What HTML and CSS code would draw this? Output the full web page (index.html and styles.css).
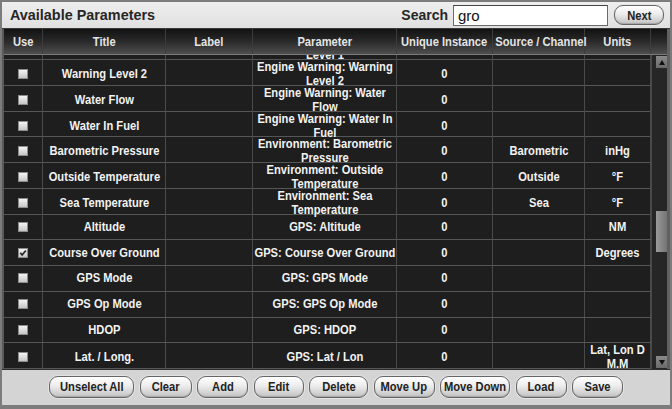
FILE: index.html
```html
<!DOCTYPE html>
<html>
<head>
<meta charset="utf-8">
<title>Available Parameters</title>
<link rel="stylesheet" href="styles.css">
</head>
<body>
<div class="window">
  <div class="titlebar">
    <span class="title">Available Parameters</span>
    <div class="search">
      <span class="search-label">Search</span>
      <div class="search-input">gro</div>
      <button class="btn btn-next"><span class="bt">Next</span></button>
    </div>
  </div>
  <div class="table-area">
    <div class="head">
      <div class="hc"><span class="t">Use</span></div>
      <div class="hc"><span class="t">Title</span></div>
      <div class="hc"><span class="t">Label</span></div>
      <div class="hc"><span class="t">Parameter</span></div>
      <div class="hc"><span class="t">Unique Instance</span></div>
      <div class="hc"><span class="t">Source / Channel</span></div>
      <div class="hc"><span class="t">Units</span></div>
      <div class="hc hc-pad"></div>
    </div>
    <div class="body">
      <div class="viewport">
        <div class="rows">
          <div class="row"><div class="c"><span class="cb"></span></div><div class="c"><span class="t">Warning Level 1</span></div><div class="c"></div><div class="c"><span class="t">Engine Warning: Warning Level 1</span></div><div class="c"><span class="t">0</span></div><div class="c"></div><div class="c"></div></div>
          <div class="row"><div class="c"><span class="cb"></span></div><div class="c"><span class="t">Warning Level 2</span></div><div class="c"></div><div class="c"><span class="t">Engine Warning: Warning Level 2</span></div><div class="c"><span class="t">0</span></div><div class="c"></div><div class="c"></div></div>
          <div class="row"><div class="c"><span class="cb"></span></div><div class="c"><span class="t">Water Flow</span></div><div class="c"></div><div class="c"><span class="t">Engine Warning: Water Flow</span></div><div class="c"><span class="t">0</span></div><div class="c"></div><div class="c"></div></div>
          <div class="row"><div class="c"><span class="cb"></span></div><div class="c"><span class="t">Water In Fuel</span></div><div class="c"></div><div class="c"><span class="t">Engine Warning: Water In Fuel</span></div><div class="c"><span class="t">0</span></div><div class="c"></div><div class="c"></div></div>
          <div class="row"><div class="c"><span class="cb"></span></div><div class="c"><span class="t">Barometric Pressure</span></div><div class="c"></div><div class="c"><span class="t">Environment: Barometric Pressure</span></div><div class="c"><span class="t">0</span></div><div class="c"><span class="t">Barometric</span></div><div class="c"><span class="t">inHg</span></div></div>
          <div class="row"><div class="c"><span class="cb"></span></div><div class="c"><span class="t">Outside Temperature</span></div><div class="c"></div><div class="c"><span class="t">Environment: Outside Temperature</span></div><div class="c"><span class="t">0</span></div><div class="c"><span class="t">Outside</span></div><div class="c"><span class="t">°F</span></div></div>
          <div class="row"><div class="c"><span class="cb"></span></div><div class="c"><span class="t">Sea Temperature</span></div><div class="c"></div><div class="c"><span class="t">Environment: Sea Temperature</span></div><div class="c"><span class="t">0</span></div><div class="c"><span class="t">Sea</span></div><div class="c"><span class="t">°F</span></div></div>
          <div class="row"><div class="c"><span class="cb"></span></div><div class="c"><span class="t">Altitude</span></div><div class="c"></div><div class="c"><span class="t">GPS: Altitude</span></div><div class="c"><span class="t">0</span></div><div class="c"></div><div class="c"><span class="t">NM</span></div></div>
          <div class="row"><div class="c"><span class="cb cb-on"><svg viewBox="0 0 9 9" width="8" height="8"><path d="M1.4 4.3 L3.6 6.6 L7.8 1.6" fill="none" stroke="#2a2a2a" stroke-width="1.9"/></svg></span></div><div class="c"><span class="t">Course Over Ground</span></div><div class="c"></div><div class="c"><span class="t">GPS: Course Over Ground</span></div><div class="c"><span class="t">0</span></div><div class="c"></div><div class="c"><span class="t">Degrees</span></div></div>
          <div class="row"><div class="c"><span class="cb"></span></div><div class="c"><span class="t">GPS Mode</span></div><div class="c"></div><div class="c"><span class="t">GPS: GPS Mode</span></div><div class="c"><span class="t">0</span></div><div class="c"></div><div class="c"></div></div>
          <div class="row"><div class="c"><span class="cb"></span></div><div class="c"><span class="t">GPS Op Mode</span></div><div class="c"></div><div class="c"><span class="t">GPS: GPS Op Mode</span></div><div class="c"><span class="t">0</span></div><div class="c"></div><div class="c"></div></div>
          <div class="row"><div class="c"><span class="cb"></span></div><div class="c"><span class="t">HDOP</span></div><div class="c"></div><div class="c"><span class="t">GPS: HDOP</span></div><div class="c"><span class="t">0</span></div><div class="c"></div><div class="c"></div></div>
          <div class="row"><div class="c"><span class="cb"></span></div><div class="c"><span class="t">Lat. / Long.</span></div><div class="c"></div><div class="c"><span class="t">GPS: Lat / Lon</span></div><div class="c"><span class="t">0</span></div><div class="c"></div><div class="c"><span class="t">Lat, Lon D M.M</span></div></div>
        </div>
      </div>
      <div class="scrollbar">
        <div class="sb-btn"><span class="tri tri-up"></span></div>
        <div class="sb-track"><div class="sb-thumb"></div></div>
        <div class="sb-btn"><span class="tri tri-down"></span></div>
      </div>
    </div>
  </div>
  <div class="footer">
    <button class="btn w85"><span class="bt">Unselect All</span></button>
    <button class="btn w52"><span class="bt">Clear</span></button>
    <button class="btn w51"><span class="bt">Add</span></button>
    <button class="btn w50"><span class="bt">Edit</span></button>
    <button class="btn w59"><span class="bt">Delete</span></button>
    <button class="btn w61"><span class="bt">Move Up</span></button>
    <button class="btn w70"><span class="bt">Move Down</span></button>
    <button class="btn w51"><span class="bt">Load</span></button>
    <button class="btn w51"><span class="bt">Save</span></button>
  </div>
</div>
</body>
</html>
```
FILE: styles.css
```css
* { box-sizing: border-box; }
html, body { margin: 0; padding: 0; }
body {
  width: 672px;
  height: 409px;
  overflow: hidden;
  background: #8a8a8a;
  font-family: "Liberation Sans", Arial, sans-serif;
}
.window {
  width: 672px;
  height: 409px;
  border: 2px solid #7c7c7c;
  border-bottom-width: 4px;
  background: #d2d2d2;
  display: flex;
  flex-direction: column;
}
.titlebar {
  height: 27px;
  flex: none;
  display: flex;
  align-items: center;
  justify-content: space-between;
  padding: 0 6px 0 8px;
  background: linear-gradient(#eeeeee, #e0e0e0);
  border-bottom: 1px solid #3a3a3a;
}
.title {
  font-weight: bold;
  font-size: 14.4px;
  color: #262626;
}
.search {
  display: flex;
  align-items: center;
}
.search-label {
  font-weight: bold;
  font-size: 14px;
  color: #262626;
  margin-right: 5px;
}
.search-input {
  width: 155px;
  height: 21px;
  background: #fff;
  border: 1px solid #6a6a6a;
  border-top-color: #444;
  font-size: 15px;
  line-height: 19px;
  padding-left: 4px;
  color: #111;
  margin-right: 6px;
}

/* condensed bold text used across the grid and the buttons */
.t, .bt {
  transform: scaleX(0.84);
  transform-origin: 50% 50%;
}
.t {
  flex: none;
  display: block;
  width: 119.05%;
  text-align: center;
}
.bt {
  flex: none;
  display: block;
  white-space: nowrap;
}

.btn {
  font-family: "Liberation Sans", Arial, sans-serif;
  font-weight: bold;
  font-size: 13.3px;
  color: #222;
  height: 22px;
  padding: 0;
  border: 1px solid #666;
  border-radius: 9px;
  background: linear-gradient(#ffffff 0%, #ececec 45%, #c2c2c2 100%);
  box-shadow: 0 0 0 1px #e4e4e4, inset 0 -1px 1px rgba(0,0,0,0.15);
  display: flex;
  align-items: center;
  justify-content: center;
  overflow: visible;
}
.btn-next { width: 50px; height: 20px; }
.table-area {
  flex: none;
  height: 340px;
  display: flex;
  flex-direction: column;
  border-left: 2px solid #5a5a5a;
  border-right: 3px solid #606060;
  background: #1e1e1e;
}
.head {
  height: 26px;
  flex: none;
  display: grid;
  grid-template-columns: 39px 123px 87px 144px 96px 92px 66px 16px;
  background: linear-gradient(#121212 0%, #2a2a2a 50%, #4e4e4e 100%);
  border-bottom: 1px solid #7a7a7a;
}
.hc {
  display: flex;
  align-items: center;
  justify-content: center;
  font-weight: bold;
  font-size: 13.3px;
  color: #e4e4e4;
  border-right: 1px solid #3c3c3c;
  white-space: nowrap;
  padding: 0 2px;
}
.hc-pad { border-right: none; }
.body {
  flex: 1;
  display: flex;
  min-height: 0;
}
.viewport {
  width: 647px;
  height: 314px;
  overflow: hidden;
}
.rows { margin-top: -20.75px; }
.row {
  height: 25.75px;
  display: grid;
  grid-template-columns: 39px 123px 87px 144px 96px 92px 66px;
  border-bottom: 1px solid #565656;
}
.c {
  display: flex;
  align-items: center;
  justify-content: center;
  font-weight: bold;
  font-size: 13.3px;
  line-height: 14px;
  color: #f2f2f2;
  border-right: 1px solid #4a4a4a;
  padding: 0 1px;
}
.cb {
  width: 10px;
  height: 10px;
  background: linear-gradient(#f4f4f4, #c6c6c6);
  border: 1px solid #8c8c8c;
  display: flex;
  align-items: center;
  justify-content: center;
}
.cb svg { display: block; }
.scrollbar {
  width: 16px;
  height: 314px;
  display: flex;
  flex-direction: column;
  padding: 1px 0 1px 4px;
  background: #262626;
  border-left: 1px solid #4a4a4a;
}
.sb-btn {
  height: 12px;
  flex: none;
  background: linear-gradient(#8a8a8a, #6a6a6a);
  display: flex;
  align-items: center;
  justify-content: center;
}
.tri {
  width: 0;
  height: 0;
  border-left: 3px solid transparent;
  border-right: 3px solid transparent;
}
.tri-up { border-bottom: 5px solid #111; }
.tri-down { border-top: 5px solid #111; }
.sb-track {
  flex: 1;
  padding-top: 143px;
}
.sb-thumb {
  height: 41px;
  background: linear-gradient(90deg, #9a9a9a, #747474);
}
.footer {
  flex: 1;
  display: flex;
  align-items: center;
  justify-content: center;
  gap: 5.5px;
  border-top: 1px solid #2e2e2e;
  background: #d4d4d4;
  padding-bottom: 2px;
}
.w85 { width: 85px; }
.w52 { width: 52px; }
.w51 { width: 51px; }
.w50 { width: 50px; }
.w59 { width: 59px; }
.w61 { width: 61px; }
.w70 { width: 70px; }
```
